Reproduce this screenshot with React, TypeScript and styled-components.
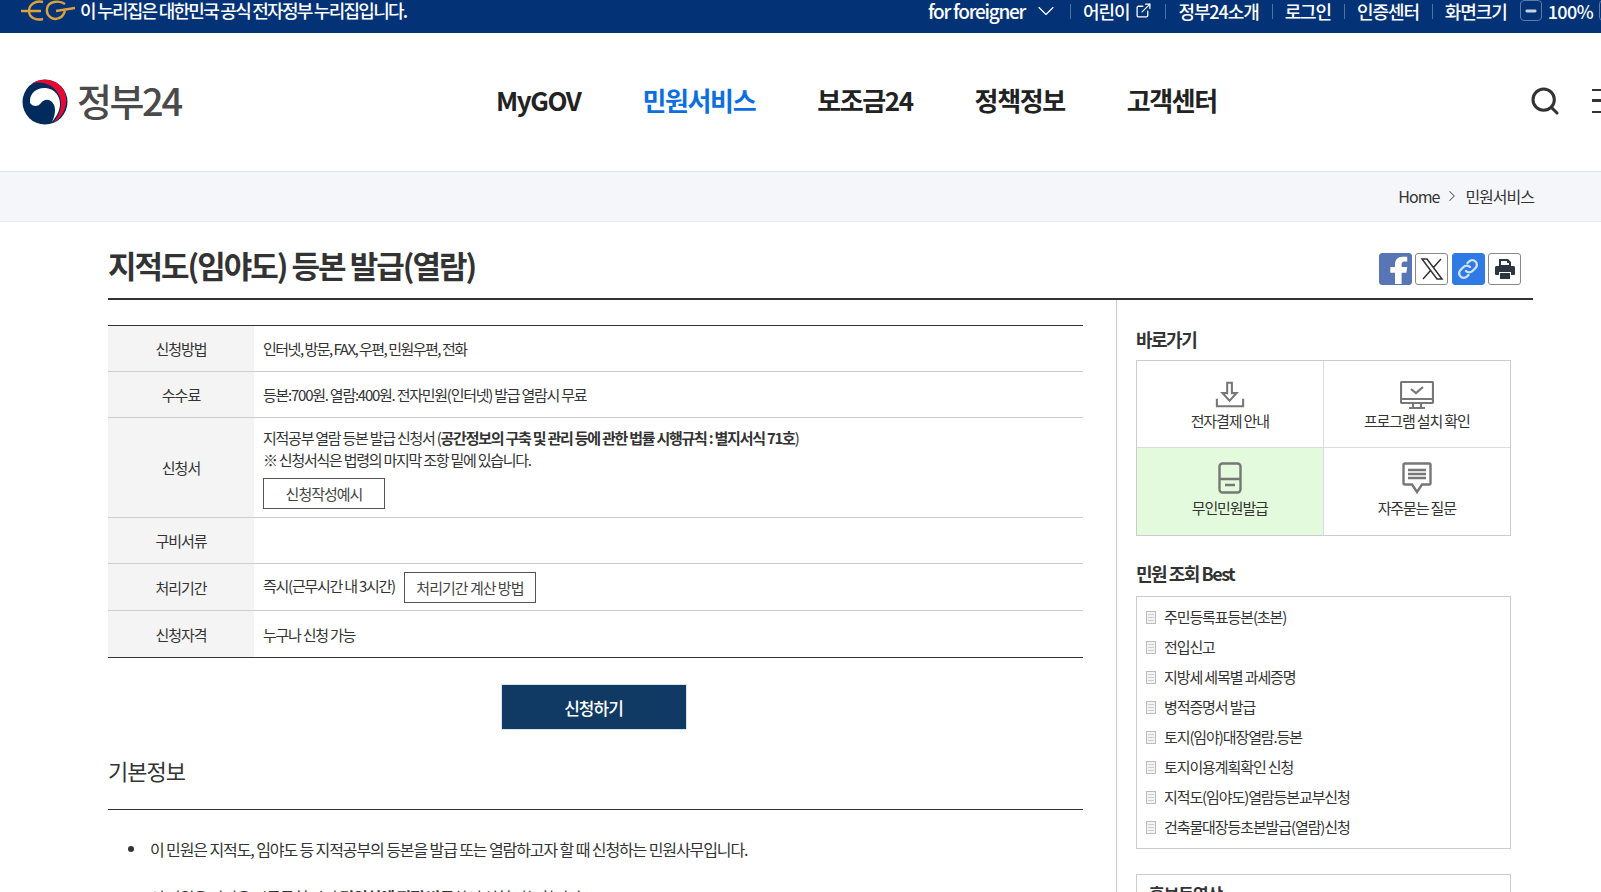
import React from "react";
import styled, { createGlobalStyle } from "styled-components";
import { ChevronDown, ChevronRight, ExternalLink, Minus, Plus, Search } from "lucide-react";

const GlobalStyle = createGlobalStyle`
  html, body {
    margin: 0;
    padding: 0;
    height: 892px;
    overflow: hidden;
    background: #fff;
  }
  * { box-sizing: border-box; }
  body {
    font-family: "Noto Sans CJK KR", "Noto Sans", sans-serif;
    color: #333;
  }
`;

const menus = ["MyGOV", "민원서비스", "보조금24", "정책정보", "고객센터"];
const utils = ["정부24소개", "로그인", "인증센터"];
const bestItems = [
  "주민등록표등본(초본)",
  "전입신고",
  "지방세 세목별 과세증명",
  "병적증명서 발급",
  "토지(임야)대장열람.등본",
  "토지이용계획확인 신청",
  "지적도(임야도)열람등본교부신청",
  "건축물대장등초본발급(열람)신청",
];

function App() {
  return (
    <Page>
      <GlobalStyle />
      <TopBar>
        <Notice>
          <svg width="54" height="22" viewBox="0 0 54 22" fill="none" stroke="#dca23c" strokeWidth="2.4">
            <path d="M0 11H20M22 2C14 0 8 5 8 11C8 17 14 21 22 19" />
            <path d="M44 4C38 0 27 1 26 9C25 16 32 21 38 18C41 17 43 14 44 11" />
            <path d="M35 11L54 8" />
          </svg>
          이 누리집은 대한민국 공식 전자정부 누리집입니다.
        </Notice>
        <TopUtils>
          <ForeignLink>
            for foreigner
            <ChevronDown size={28} strokeWidth={1} />
          </ForeignLink>
          <UtilLink>
            어린이
            <ExternalLink size={17} strokeWidth={1.8} />
          </UtilLink>
          {utils.map((u) => (
            <UtilLink key={u}>{u}</UtilLink>
          ))}
          <UtilLink>화면크기</UtilLink>
          <ZoomBtn>
            <Minus size={14} strokeWidth={5} color="#c9d3e4" />
          </ZoomBtn>
          <ZoomText>100%</ZoomText>
          <ZoomBtn>
            <Plus size={14} strokeWidth={5} color="#c9d3e4" />
          </ZoomBtn>
        </TopUtils>
      </TopBar>

      <Header>
        <Logo>
          <svg width="46" height="46" viewBox="0 0 46 46">
            <circle cx="23" cy="23" r="22.5" fill="#002b5c" />
            <path d="M8 24C7 13 16 8 24 9C33 10 38 17 38 25C38 32 34 38 30 43C34 34 34 27 30 23C26 19 21 21 19 24C16 28 11 28 8 24Z" fill="#fff" />
            <path d="M9 5C20 -3 38 0 43 14C47 26 41 38 31 44C39 35 41 24 37 16C32 6 19 1 9 5Z" fill="#e60a32" />
          </svg>
          <LogoText>정부24</LogoText>
        </Logo>
        <Nav>
          {menus.map((m) => (
            <NavItem key={m} $active={m === "민원서비스"}>
              {m}
            </NavItem>
          ))}
        </Nav>
        <HeaderTools>
          <Search size={32} strokeWidth={2.3} color="#333" />
          <Hamburger />
        </HeaderTools>
      </Header>

      <Crumbs>
        <span>Home</span>
        <ChevronRight size={18} strokeWidth={1.4} color="#555" />
        <span>민원서비스</span>
      </Crumbs>

      <Container>
        <TitleRow>
          <Title>지적도(임야도) 등본 발급(열람)</Title>
          <ShareGroup>
            <ShareBtn $bg="#5876b5" $border="#5876b5">
              <svg width="33" height="32" viewBox="0 0 33 32">
                <path d="M23 32V20h5l1-6h-6v-3c0-2 1-3 3-3h3V3h-5c-5 0-8 3-8 8v3h-5v6h5v12z" fill="#fff" />
              </svg>
            </ShareBtn>
            <ShareBtn $bg="#fff" $border="#888">
              <svg width="24" height="24" viewBox="0 0 24 24" fill="none" stroke="#333" strokeWidth="1.5">
                <path d="M2 2h5l15 20h-5zM21 2l-8 9M3 22l8-9" />
              </svg>
            </ShareBtn>
            <ShareBtn $bg="#2f7ae5" $border="#2f7ae5">
              <svg width="24" height="24" viewBox="0 0 24 24" fill="none" stroke="#cfe2fb" strokeWidth="2.4" strokeLinecap="round">
                <path d="M10 14a4.5 4.5 0 0 0 6.5 0l3-3A4.5 4.5 0 0 0 13 4.5l-1.5 1.5" />
                <path d="M14 10a4.5 4.5 0 0 0-6.5 0l-3 3a4.5 4.5 0 0 0 6.5 6.5l1.5-1.5" />
              </svg>
            </ShareBtn>
            <ShareBtn $bg="#fff" $border="#888">
              <svg width="24" height="24" viewBox="0 0 24 24" fill="#2d3640">
                <path d="M6 2h9l3 3v4H6zM8 4v4h8V6h-2V4z" fillRule="evenodd" />
                <path d="M3 9h18a2 2 0 0 1 1 2v6a1 1 0 0 1-1 1h-3v-3H6v3H3a1 1 0 0 1-1-1v-6a2 2 0 0 1 1-2z" />
                <path d="M7 16h10v6H7z" />
              </svg>
            </ShareBtn>
          </ShareGroup>
        </TitleRow>

        <Columns>
          <MainCol>
            <InfoTable>
              <tbody>
                <tr>
                  <Th $h={46}>신청방법</Th>
                  <Td $tight>인터넷, 방문, FAX, 우편, 민원우편, 전화</Td>
                </tr>
                <tr>
                  <Th $h={46}>수수료</Th>
                  <Td>등본:700원. 열람:400원. 전자민원(인터넷) 발급 열람시 무료</Td>
                </tr>
                <tr>
                  <Th $h={100}>신청서</Th>
                  <Td>
                    <FormLine>
                      지적공부 열람 등본 발급 신청서 (<b>공간정보의 구축 및 관리 등에 관한 법률 시행규칙 : 별지서식 71호</b>)
                    </FormLine>
                    <FormLine>※ 신청서식은 법령의 마지막 조항 밑에 있습니다.</FormLine>
                    <GhostBtn $wide>신청작성예시</GhostBtn>
                  </Td>
                </tr>
                <tr>
                  <Th $h={46}>구비서류</Th>
                  <Td />
                </tr>
                <tr>
                  <Th $h={47}>처리기간</Th>
                  <Td>
                    즉시(근무시간 내 3시간)
                    <GhostBtn>처리기간 계산 방법</GhostBtn>
                  </Td>
                </tr>
                <tr>
                  <Th $h={47}>신청자격</Th>
                  <Td>누구나 신청 가능</Td>
                </tr>
              </tbody>
            </InfoTable>
            <ApplyWrap>
              <ApplyBtn>신청하기</ApplyBtn>
            </ApplyWrap>
            <SectionTitle>기본정보</SectionTitle>
            <BulletList>
              <li>이 민원은 지적도, 임야도 등 지적공부의 등본을 발급 또는 열람하고자 할 때 신청하는 민원사무입니다.</li>
              <li>이 민원은 가까운 시군구청 담당 <b>민원실에 직접 방문</b>하여 신청 가능합니다.</li>
            </BulletList>
          </MainCol>

          <Aside>
            <AsideTitle>바로가기</AsideTitle>
            <QuickGrid>
              <QuickCell>
                <QuickIcon>
                  <svg width="30" height="28" viewBox="0 0 32 28" fill="none" stroke="#777" strokeWidth="2.2">
                    <path d="M13 1h5v11h5l-7.5 8L8 12h5zM2 18v8h28v-8" />
                  </svg>
                </QuickIcon>
                전자결제 안내
              </QuickCell>
              <QuickCell>
                <QuickIcon>
                  <svg width="34" height="28" viewBox="0 0 34 28" fill="none" stroke="#777" strokeWidth="2.2">
                    <rect x="1" y="1" width="32" height="21" rx="1" />
                    <path d="M1 18h32M11 8l5 4 7-6M13 22v4M21 22v4M9 27h16" />
                  </svg>
                </QuickIcon>
                프로그램 설치 확인
              </QuickCell>
              <QuickCell $green>
                <QuickIcon $raised>
                  <svg width="24" height="32" viewBox="0 0 24 32" fill="none" stroke="#777" strokeWidth="2.4">
                    <rect x="1.5" y="1.5" width="21" height="29" rx="3" />
                    <path d="M1.5 17h21M7 23h10" />
                  </svg>
                </QuickIcon>
                무인민원발급
              </QuickCell>
              <QuickCell>
                <QuickIcon $raised>
                  <svg width="30" height="32" viewBox="0 0 30 32" fill="none" stroke="#777" strokeWidth="2.4">
                    <path d="M3 1.5h24a1.5 1.5 0 0 1 1.5 1.5v18a1.5 1.5 0 0 1-1.5 1.5h-7L15 30l-5-7.5H3A1.5 1.5 0 0 1 1.5 21V3A1.5 1.5 0 0 1 3 1.5z" />
                    <path d="M6 8h18M6 12h18M6 16h18" />
                  </svg>
                </QuickIcon>
                자주묻는 질문
              </QuickCell>
            </QuickGrid>

            <AsideTitle $gap>민원 조회 Best</AsideTitle>
            <BestBox>
              {bestItems.map((b) => (
                <BestRow key={b}>
                  <svg width="10" height="13" viewBox="0 0 10 13" fill="#f4f4f4" stroke="#bbb">
                    <rect x="0.5" y="0.5" width="9" height="12" />
                    <path d="M2 3.5h6M2 6.5h6M2 9.5h6" stroke="#ccc" />
                  </svg>
                  {b}
                </BestRow>
              ))}
            </BestBox>
            <PromoBox>홍보동영상</PromoBox>
          </Aside>
        </Columns>
      </Container>
    </Page>
  );
}

export default App;

const Page = styled.div`
  width: 1601px;
  height: 892px;
  overflow: hidden;
`;

const TopBar = styled.div`
  height: 33px;
  background: #033376;
  color: #fff;
  display: flex;
  justify-content: space-between;
  align-items: flex-start;
  padding-left: 21px;
  font-size: 18px;
  font-weight: 500;
  line-height: 20px;
  white-space: nowrap;
`;

const Notice = styled.div`
  display: flex;
  align-items: flex-start;
  gap: 5px;
  letter-spacing: -1.74px;
  svg {
    flex: none;
  }
`;

const TopUtils = styled.div`
  display: flex;
  align-items: center;
  height: 21px;
  margin-right: -20px;
  letter-spacing: -1.1px;
`;

const ForeignLink = styled.span`
  display: flex;
  align-items: center;
  gap: 7px;
  padding-right: 10px;
  font-size: 19px;
  letter-spacing: -1.25px;
`;

const UtilLink = styled.span`
  display: flex;
  align-items: center;
  gap: 6px;
  padding: 0 13px;
  position: relative;
  &::before {
    content: "";
    position: absolute;
    left: 0;
    top: 3px;
    height: 15px;
    width: 1px;
    background: #54709e;
  }
`;

const ZoomBtn = styled.span`
  flex: none;
  display: flex;
  align-items: center;
  justify-content: center;
  width: 22px;
  height: 21px;
  border: 1px solid #5f7ba8;
  border-radius: 4px;
`;

const ZoomText = styled.span`
  margin: 0 6px;
  letter-spacing: -0.6px;
`;

const Header = styled.header`
  height: 139px;
  display: flex;
  align-items: center;
  position: relative;
  padding: 0 0 4px 22px;
  border-bottom: 1px solid #e2e4e8;
`;

const Logo = styled.div`
  display: flex;
  align-items: center;
  gap: 9px;
  width: 474px;
  svg {
    margin-top: 3px;
  }
`;

const LogoText = styled.span`
  font-size: 38px;
  font-weight: 500;
  color: #4a4a4a;
  letter-spacing: -2.4px;
  line-height: 46px;
`;

const Nav = styled.nav`
  display: flex;
  gap: 62px;
`;

const NavItem = styled.a<{ $active?: boolean }>`
  font-size: 26px;
  font-weight: 700;
  letter-spacing: -1.4px;
  line-height: 36px;
  color: ${({ $active }) => ($active ? "#0b6fe0" : "#222")};
`;

const HeaderTools = styled.div`
  position: absolute;
  left: 1529px;
  top: 52px;
  display: flex;
  gap: 31px;
  align-items: center;
`;

const Hamburger = styled.span`
  display: block;
  flex: none;
  width: 24px;
  height: 24px;
  border-top: 2.5px solid #333;
  border-bottom: 2.5px solid #333;
  position: relative;
  &::after {
    content: "";
    position: absolute;
    top: 8px;
    left: 0;
    width: 24px;
    height: 2.5px;
    background: #333;
  }
`;

const Crumbs = styled.div`
  height: 50px;
  background: #f5f6fa;
  border-bottom: 1px solid #e8e9ec;
  display: flex;
  align-items: center;
  justify-content: flex-end;
  gap: 4px;
  padding: 0 67px 2px 0;
  font-size: 16px;
  letter-spacing: -1px;
  color: #333;
`;

const Container = styled.main`
  width: 1425px;
  margin-left: 108px;
`;

const TitleRow = styled.div`
  height: 78px;
  display: flex;
  justify-content: space-between;
  align-items: flex-start;
  border-bottom: 2px solid #333;
`;

const Title = styled.h1`
  margin: 22px 0 0;
  font-size: 31px;
  font-weight: 700;
  letter-spacing: -2px;
  line-height: 42px;
  color: #333;
`;

const ShareGroup = styled.div`
  display: flex;
  gap: 3.3px;
  margin: 31px 12px 0 0;
`;

const ShareBtn = styled.span<{ $bg: string; $border: string }>`
  width: 33px;
  height: 32px;
  border: 1px solid ${({ $border }) => $border};
  border-radius: 3px;
  background: ${({ $bg }) => $bg};
  display: flex;
  align-items: center;
  justify-content: center;
  overflow: hidden;
`;

const Columns = styled.div`
  display: flex;
`;

const MainCol = styled.div`
  width: 1009px;
  padding: 25px 33px 0 0;
  border-right: 1px solid #ccc;
  height: 600px;
`;

const InfoTable = styled.table`
  width: 975px;
  border-collapse: collapse;
  border-top: 1px solid #333;
  border-bottom: 1px solid #333;
  font-size: 15px;
  letter-spacing: -1.25px;
  tr + tr {
    border-top: 1px solid #ccc;
  }
`;

const Th = styled.th<{ $h: number }>`
  width: 146px;
  height: ${({ $h }) => $h}px;
  background: #f4f4f4;
  font-weight: 400;
  letter-spacing: -1px;
  color: #333;
  padding: 0;
`;

const Td = styled.td<{ $tight?: boolean }>`
  padding: 0 9px;
  color: #333;
  letter-spacing: ${({ $tight }) => ($tight ? "-1.5px" : "inherit")};
`;

const FormLine = styled.div`
  line-height: 22px;
  &:first-child {
    margin-top: 9px;
  }
`;

const GhostBtn = styled.button<{ $wide?: boolean }>`
  height: 31px;
  width: ${({ $wide }) => ($wide ? "122px" : "132px")};
  margin: ${({ $wide }) => ($wide ? "7px 0 8px 0" : "0 0 0 9px")};
  border: 1px solid #555;
  background: #fff;
  font: inherit;
  letter-spacing: -1px;
  color: #444;
  padding: 0;
  display: ${({ $wide }) => ($wide ? "block" : "inline-block")};
  vertical-align: -2px;
`;

const ApplyWrap = styled.div`
  display: flex;
  justify-content: center;
  margin-top: 26px;
  padding-right: 4px;
`;

const ApplyBtn = styled.button`
  width: 186px;
  height: 46px;
  background: #103a63;
  color: #fff;
  border: 1px solid #dde3ea;
  font: inherit;
  font-size: 17px;
  font-weight: 500;
  letter-spacing: -1px;
`;

const SectionTitle = styled.h2`
  margin: 20px 0 0;
  height: 60px;
  border-bottom: 1px solid #333;
  font-size: 22px;
  font-weight: 400;
  letter-spacing: -1px;
  line-height: 40px;
  color: #333;
`;

const BulletList = styled.ul`
  margin: 22px 0 0;
  padding: 0 0 0 42px;
  list-style: none;
  font-size: 16px;
  letter-spacing: -1.1px;
  line-height: 34px;
  li {
    position: relative;
    margin-bottom: 14px;
  }
  li::before {
    content: "";
    position: absolute;
    left: -22px;
    top: 14px;
    width: 6px;
    height: 6px;
    border-radius: 50%;
    background: #333;
  }
`;

const Aside = styled.aside`
  width: 375px;
  margin-left: 19px;
  padding-top: 24px;
`;

const AsideTitle = styled.h3<{ $gap?: boolean }>`
  margin: ${({ $gap }) => ($gap ? "22px 0 8px" : "0 0 6px")};
  font-size: 18px;
  font-weight: 700;
  letter-spacing: -1.5px;
  line-height: 30px;
  color: #333;
`;

const QuickGrid = styled.div`
  display: grid;
  grid-template-columns: 1fr 1fr;
  grid-auto-rows: 87px;
  border: 1px solid #ccc;
`;

const QuickCell = styled.div<{ $green?: boolean }>`
  display: flex;
  flex-direction: column;
  align-items: center;
  font-size: 15px;
  line-height: 22px;
  letter-spacing: -1.15px;
  color: #333;
  background: ${({ $green }) => ($green ? "#e3fadc" : "#fff")};
  border-color: #ddd;
  border-style: solid;
  border-width: 0;
  &:nth-child(odd) {
    border-right-width: 1px;
  }
  &:nth-child(-n + 2) {
    border-bottom-width: 1px;
  }
`;

const QuickIcon = styled.div<{ $raised?: boolean }>`
  height: ${({ $raised }) => ($raised ? "46px" : "48px")};
  margin-bottom: ${({ $raised }) => ($raised ? "3px" : "1px")};
  display: flex;
  align-items: flex-end;
`;

const BestBox = styled.div`
  border: 1px solid #ccc;
  padding: 4px 9px 7px;
`;

const BestRow = styled.div`
  display: flex;
  align-items: center;
  gap: 8px;
  height: 30px;
  font-size: 15px;
  letter-spacing: -1.1px;
  color: #333;
  svg {
    flex: none;
    margin-top: 2px;
  }
`;

const PromoBox = styled.div`
  margin-top: 25px;
  border: 1px solid #ccc;
  padding: 6px 12px;
  height: 200px;
  font-size: 17px;
  font-weight: 700;
  letter-spacing: -1px;
`;
